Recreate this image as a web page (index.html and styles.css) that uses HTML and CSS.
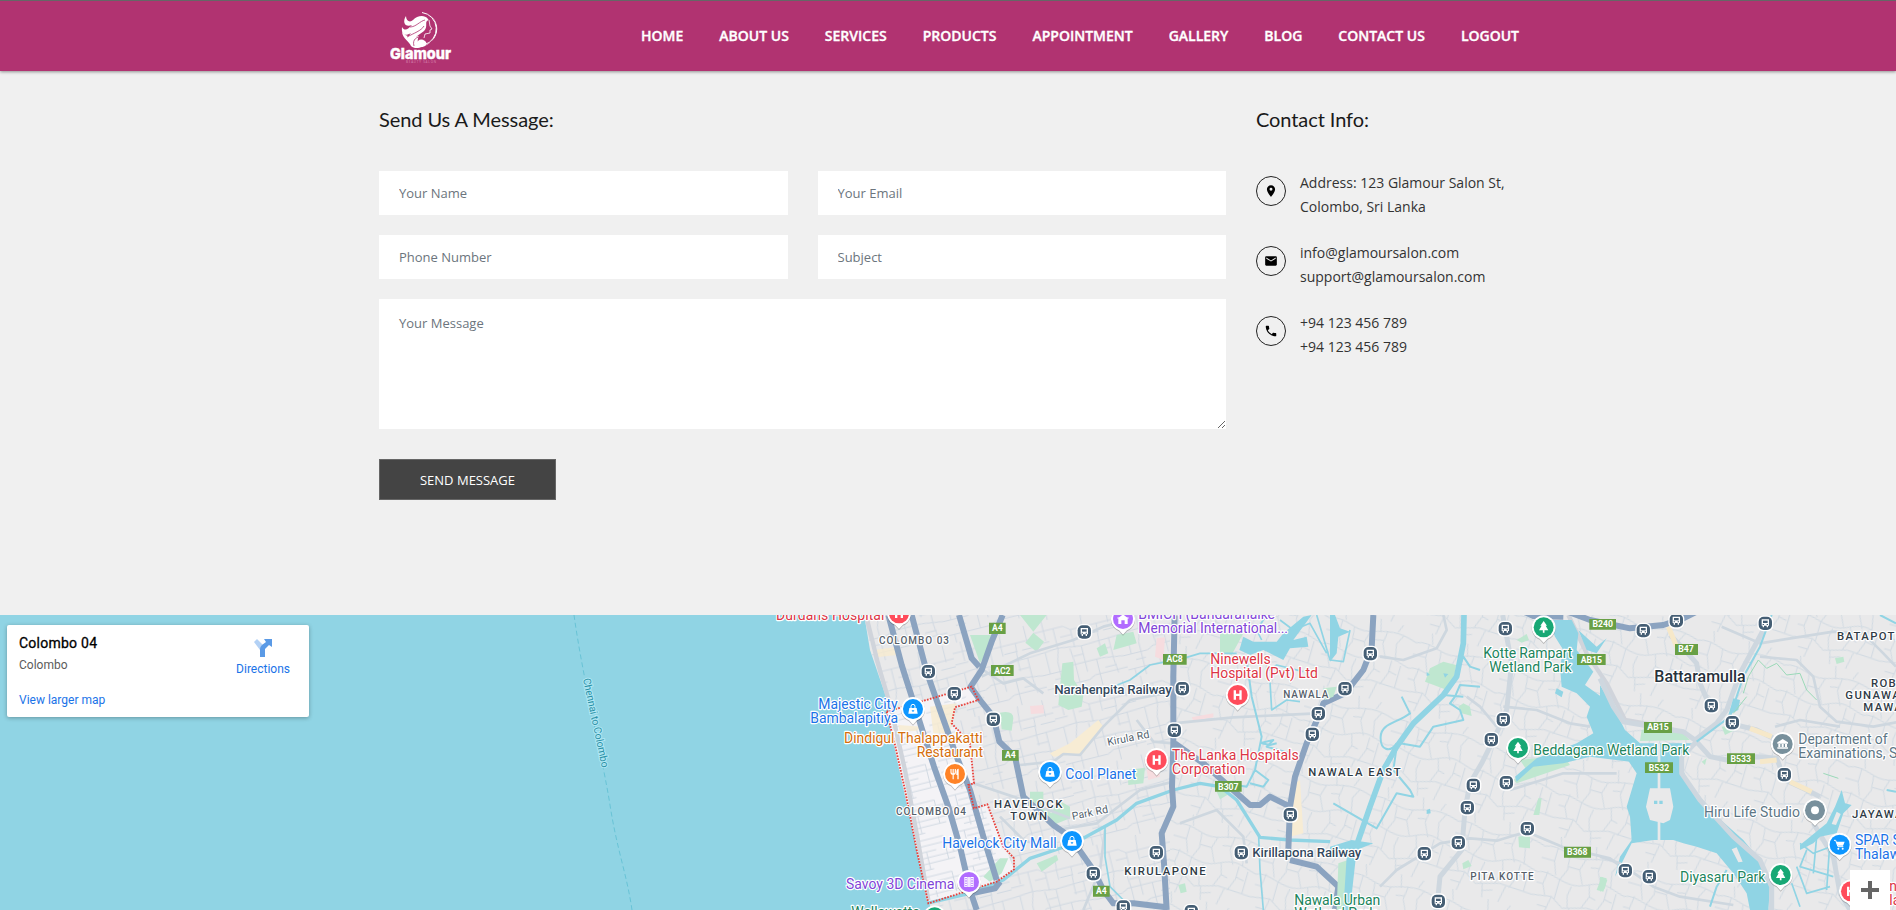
FILE: index.html
```html
<!DOCTYPE html>
<html lang="en">
<head>
<meta charset="utf-8">
<title>Glamour - Contact Us</title>
<link rel="stylesheet" href="styles.css">
</head>
<body>
<header class="header">
  <div class="container header-inner">
    <a class="logo" href="#">
      <svg width="62" height="56" viewBox="0 0 62 56">
        <path d="M32 1.500A16.500 16.500 0 0 1 34 33.800" fill="none" stroke="#fff" stroke-width="1"/>
        <path d="M31 1.200C46 2 50 18 43 28C41 31 38 34 34 35C43 31 48.500 24 47 15C45.500 7 39 1.500 31 1.200Z" fill="#fff"/>
        <path d="M38 8C34 3 27 5 23 9C20 12 16 10 16 5C12 11 15 17 22 14C18 18 15 21 12 16C11 25 16 25 21 22C17 26 19 31 25 35C21 27 29 24 34 20C38 16 35 12 37 10C38 9 39 9 38 8Z" fill="#fff"/>
        <path d="M12 21C13 28 19 30 21 35C24 38 29 37 32 36C27 34 27 28 29 25C25 26 17 27 12 21Z" fill="#fff"/>
        <path d="M26 34C27 29 31 27 35 30C40 34 31 39 26 34Z" fill="#fff"/>
        <path d="M39 9L40 15L42 18L40 19L40 22L35 23L34 27" fill="none" stroke="#fff" stroke-width=".8"/>
        <path d="M20 16C26 16 30 10 35 9M17 26C24 22 31 20 34 15M24 35C22 28 27 26 32 25" fill="none" stroke="#b13371" stroke-width=".8"/>
        <text x="0" y="48" textLength="61" lengthAdjust="spacingAndGlyphs" class="logo-name">Glamour</text>
        <text x="16" y="51.800" textLength="30" class="logo-sub">BEAUTY SALON</text>
      </svg>
    </a>
    <nav class="nav">
      <a href="#">Home</a><a href="#">About Us</a><a href="#">Services</a><a href="#">Products</a><a href="#">Appointment</a><a href="#">Gallery</a><a href="#">Blog</a><a href="#">Contact Us</a><a href="#">Logout</a>
    </nav>
  </div>
</header>

<main class="container contact">
  <section class="message">
    <h2>Send Us A Message:</h2>
    <form class="form">
      <input type="text" placeholder="Your Name">
      <input type="text" placeholder="Your Email">
      <input type="text" placeholder="Phone Number">
      <input type="text" placeholder="Subject">
      <textarea placeholder="Your Message"></textarea>
      <button type="button">Send Message</button>
    </form>
  </section>
  <section class="info">
    <h2>Contact Info:</h2>
    <ul>
      <li><span class="ring"><svg width="14" height="14" viewBox="0 0 24 24"><path d="M12 2C8.130 2 5 5.130 5 9c0 5.250 7 13 7 13s7-7.750 7-13c0-3.870-3.130-7-7-7zm0 9.500a2.500 2.500 0 1 1 0-5 2.500 2.500 0 0 1 0 5z"/></svg></span><p>Address: 123 Glamour Salon St,<br>Colombo, Sri Lanka</p></li>
      <li><span class="ring"><svg width="14" height="14" viewBox="0 0 24 24"><path d="M20 4H4c-1.100 0-2 .9-2 2v12c0 1.100.9 2 2 2h16c1.100 0 2-.9 2-2V6c0-1.100-.9-2-2-2zm0 4l-8 5-8-5V6l8 5 8-5v2z"/></svg></span><p>info@glamoursalon.com<br>support@glamoursalon.com</p></li>
      <li><span class="ring"><svg width="14" height="14" viewBox="0 0 24 24"><path d="M6.600 10.800c1.400 2.800 3.800 5.100 6.600 6.600l2.200-2.200c.3-.3.700-.4 1-.2 1.100.4 2.300.6 3.600.6.600 0 1 .4 1 1V20c0 .6-.4 1-1 1C10.600 21 3 13.400 3 4c0-.6.400-1 1-1h3.500c.6 0 1 .4 1 1 0 1.300.2 2.500.6 3.600.1.300 0 .7-.2 1z"/></svg></span><p>+94 123 456 789<br>+94 123 456 789</p></li>
    </ul>
  </section>
</main>

<section class="map">
<svg class="map-canvas" width="1896" height="295" viewBox="0 615 1896 295">
  <defs>
    <pattern id="st1" width="250" height="230" patternUnits="userSpaceOnUse" patternTransform="rotate(-14)">
      <path class="street" d="M0 30H90L110 45H250M0 95L60 90L130 100L250 95M0 160H70L90 150H180L250 160M0 205H130L150 195H250M30 0V60M60 30V95L50 130V230M110 45V100M150 0L145 45V75M190 45L185 95V130M225 0V50M20 95V160M95 100L100 150V205M130 100V180M165 150V230M215 95V160L220 205M0 65H40M150 70H190M205 70H250M100 125H130M180 125H215M30 180H60M185 180H220M75 60H110M20 230V205"/>
    </pattern>
    <pattern id="st2" width="270" height="240" patternUnits="userSpaceOnUse" patternTransform="rotate(16)">
      <path class="street" d="M0 40C50 20 80 60 130 45S210 20 270 40M0 120C40 100 90 150 150 120S220 110 270 120M0 190L60 180L100 205L170 185L270 190M40 35V75L55 115M80 45L85 90L70 125V185M130 45L120 80L140 122M180 30L175 70L195 112M230 30L215 60L225 110M30 110L25 150L40 182M110 135L105 165L115 200M160 115L170 150L155 188M215 112V150L200 190M245 120V188M60 180L50 240M120 200L130 240M190 188L180 240M40 0L50 32M150 0L160 38M220 0L210 25M85 80H120M175 60L150 65M25 150H5M170 150L190 155M215 145L240 150M55 215H25M125 220L155 210M0 75H40"/>
    </pattern>
    <pattern id="comb" width="190" height="110" patternUnits="userSpaceOnUse" patternTransform="rotate(-14)">
      <path class="street" d="M0 12H150M30 30H190M0 48H120M60 66H190M0 84H170M30 102H100M25 12V48M90 48V102M150 12V84M170 30V66M50 84V110"/>
    </pattern>
    <g id="bus">
      <rect x="-24" y="-24" width="48" height="48" rx="18" fill="#fff"/><rect x="-20" y="-20" width="40" height="40" rx="15" fill="#455e74"/>
      <path d="M-11-12H11V7H8V12H4V7H-4V12H-8V7H-11Z" fill="#fff"/><path d="M-7-8H7V-1H-7Z" fill="#455e74"/><path d="M-8 2h4v3h-4zM4 2h4v3H4z" fill="#455e74"/>
    </g>
    <path id="pin" d="M0 47L-12 34A36 36 0 1 1 12 34Z" fill="#fff"/>
    <g id="bag"><use href="#pin" class="pin-shadow"/><circle r="30" fill="#0d96ff"/><path d="M-11-3H11L14 14H-14Z" fill="#fff"/><path d="M-6-2V-8A6 6 0 0 1 6-8V-2" fill="none" stroke="#fff" stroke-width="3"/><path d="M-4 4A4 4 0 0 0 4 4Z" fill="#0d96ff"/></g>
    <g id="hosp"><use href="#pin" class="pin-shadow"/><circle r="30" fill="#ff4c5b"/><path d="M-12-14h7v10H5v-10h7V14H5V3H-5V14h-7z" fill="#fff"/></g>
    <g id="tree"><use href="#pin" class="pin-shadow"/><circle r="30" fill="#18a875"/><path d="M0-19L10-5H6L14 9H2.500V16H-2.500V9H-14L-6-5H-10Z" fill="#fff"/></g>
  </defs>

  <rect y="615" width="1896" height="295" fill="#90d4e4"/>
  <path d="M574 615C583 680 603 760 610 805S627 875 632 910" class="ferry"/>
  <text class="ferry-label" transform="translate(583 679) rotate(78)" textLength="91">Chennai to Colombo</text>

  <g transform="translate(770 610) scale(.333333)">
    <!-- land -->
    <path id="land" d="M280 0L300 120L348 260L380 410L410 560L440 720L470 860L485 900H3400V0Z" fill="#e9e9ea"/>
    <path d="M280 0L300 120L348 260L380 410L410 560L440 720L470 860L485 900H1200V0Z" fill="url(#st1)"/>
    <path d="M1200 0H3400V900H1200Z" fill="url(#st2)"/>
    <path d="M350 305L605 230L625 270L555 292L545 340L600 400L612 520L595 525L612 595L652 583L732 778L680 815L475 880Z" fill="#f4f3f6"/>
    <path d="M360 320L600 240L548 330L590 540L645 590L700 800L475 870Z" fill="url(#comb)"/>
    <path d="M312 120L372 112L380 135L320 142ZM385 345L455 350L440 362L390 366ZM480 290L560 280L540 370L490 370Z" fill="#f7ebcf" opacity=".8"/>

    <!-- coastal districts -->
    <g>
      <path class="park" d="M600 75H680L630 160ZM750 15H830L790 65ZM790 68L822 95L800 125L766 98ZM690 308Q730 300 730 325L725 362L695 358ZM780 545H820V595L845 610L865 570L900 590V625L850 645L780 590ZM640 800L690 745L715 745L695 790L660 815ZM800 760L860 735L865 750L815 785Z"/>
      <path class="park" d="M877 160L910 155L912 210L940 255L935 290L895 300L865 285L872 210ZM980 115L1005 100L1015 130L990 140ZM1040 75L1090 65L1100 100L1030 120ZM1350 70L1420 70L1385 135L1350 125ZM1072 480L1125 473L1120 520L1075 525ZM1340 545L1365 540L1372 555L1350 568ZM1225 825L1245 820L1250 845L1232 850Z"/>
      <path d="M780 288L820 285L822 310L783 312ZM1160 85L1185 82L1180 150L1155 140ZM1265 322L1330 310V322L1270 332ZM1130 480L1165 470L1170 500L1135 510Z" fill="#f6dcdf"/>
      <path d="M840 430L900 400L985 330L1000 350L940 430L850 440ZM1560 530L1590 510L1600 670L1560 680Z" fill="#f7ecd4"/>
      <path class="road wide" d="M288 15L325 165L362 290L405 480L440 670L475 870"/>
      <path class="road" d="M635 200L780 130L910 90L1000 50L1060 35M750 465L850 455L880 432L930 435L1000 350L1080 270L1210 245M1210 340L1390 322L1640 310M1210 515L1110 540L980 640L860 660M610 520L760 570L900 625M1210 400L1150 395L1100 330"/>
      <path class="road" d="M640 180L700 220L760 205L820 250M690 620L760 690L850 720M1005 660L990 780L940 900M1230 640L1340 600L1420 680L1430 760"/>
      <path class="water-line" d="M470 880L600 850L700 810L780 745L900 705L940 685L1040 630L1100 580L1210 540L1290 520L1350 530L1400 570L1470 682L1560 690L1680 695"/>
      <path class="water-line thin" d="M1005 650V740L1020 830L1060 870M990 245L1080 210L1140 165L1240 145L1290 130H1400M1466 680L1470 780L1480 900"/>
      <path class="water-line mid" d="M1430 150L1445 260L1475 380L1455 480L1430 530L1370 520M1470 400L1510 390L1490 410L1560 430M1455 480L1495 510L1480 530L1440 520M1475 400L1500 405L1520 400"/>
      <path class="water" d="M1408 120L1420 80L1450 95L1520 95L1540 70L1600 20L1625 15L1570 90L1610 80L1615 110L1560 115L1540 150L1480 120L1440 135Z"/>
      <path class="water-line thin" d="M1490 185L1520 165L1600 185M1500 215L1505 300L1550 270L1590 275M1490 15L1460 60L1475 90M1530 30L1570 60L1620 40L1670 130M1640 15L1680 150L1720 155L1740 60"/>
      <path class="highway" d="M355 15L395 165L430 275L460 370L492 470L535 590L570 710L600 840L620 900M425 15L470 185L510 300L560 440L600 540L640 680L680 810M567 15L605 145L628 170M698 15L665 95L635 180L602 230L630 270L670 320L688 395L735 440L760 560L850 645L900 680L970 780L1000 840L1030 880H1090L1190 892M605 850L675 835L690 815"/>
      <path class="highway" d="M1214 15L1210 200V400L1206 530L1210 590L1175 670L1182 760L1190 900M1215 400L1300 460L1400 550L1440 585L1470 585L1500 560L1560 590L1575 500L1610 400L1650 310L1660 280L1725 250L1780 180L1805 115L1810 15M1560 590L1555 720M1560 750L1640 770L1705 830L1695 900"/>
    </g>

    <!-- Nawala and Pita Kotte -->
    <g transform="translate(1680 0)">
      <path class="park" d="M300 175L340 155L378 165L370 220L345 238L285 215ZM385 290L400 280L420 290L425 318L395 310ZM560 90L590 72L597 90L575 98ZM570 450L700 435L720 465L560 520L550 510L590 480ZM610 615L625 565H635L628 615ZM565 680L600 675V715L567 712ZM397 760L415 750L425 768L400 778ZM800 840L815 800L832 810L820 845ZM-20 235L20 230L10 260L-15 270ZM25 760L70 745L55 900H20Z"/>
      <path class="road big" d="M518 15L545 160L530 300L495 380L455 460L420 520L405 600L395 720L330 800L320 900"/>
      <path class="road" d="M150 830L200 780L330 700L420 685L500 692L590 665L700 712L840 745L900 790M150 140L220 150L320 115L350 60L340 15M520 290L620 300L720 340L780 350M410 260L450 290L500 350M540 540L700 490L860 490"/>
      <path class="road wide" d="M715 15L770 130L830 220L885 330L1000 350"/>
      <path class="water-line river" d="M402 15L400 100L380 200L340 255L250 340L200 410L160 480L120 590L75 720"/>
      <path class="water-line mid" d="M200 400C180 430 150 420 152 380S200 340 240 310L215 260M210 400L270 410L310 350L400 330L390 300L360 280L375 260L390 225L450 230M200 410L190 480L240 540L250 560L200 550L140 655L10 580M380 190L400 140L420 170L450 180M340 255L400 260"/>
      <path class="water" d="M0 710L65 690L130 700L80 720L60 900H40L50 740L0 745ZM0 15L15 15L30 55L60 65L25 80L20 130L0 155ZM290 185L300 195L290 198ZM340 190L355 192L345 203ZM290 600L300 596L302 610L290 612Z"/>
      <path class="water" d="M655 30H725L745 70L740 120L790 185L765 225L835 275L855 340L875 390L930 425L900 455L780 440L700 460L610 470L560 515L555 500L620 445L740 400L790 370L770 320L780 290L740 250L695 230L690 170L700 120L675 80Z"/>
      <path class="water" d="M745 60L800 110L830 85L800 130L770 120ZM680 235L700 245L695 262L675 250Z"/>
      <path class="highway" d="M570 0L610 18L700 20M700 0L780 30L900 55L1000 45L1060 25L1100 5"/>
    </g>

    <!-- Battaramulla -->
    <g transform="translate(2490 0)">
      <path class="water" d="M0 225L45 300L75 360L120 400H280L240 450L260 510L340 610L430 690L480 750L510 830L505 900H450L440 850L400 790L350 730L290 710L250 700L220 690L160 690L95 700L45 800L60 740L95 690L90 620L80 590L110 490L70 430L0 400Z"/>
      <path class="park" d="M125 360L180 345L250 370L270 390L120 393ZM365 350L400 345L405 360L375 375ZM705 145L730 140L733 155L710 162ZM0 800L20 805L15 835L0 845ZM305 455L320 445L315 465Z"/>
      <path d="M150 535H210L220 590L210 630L190 640L150 630L138 590ZM410 712L428 755L415 757L395 718Z" fill="#e9e9ea"/>
      <path class="road causeway" d="M177 400V540M177 635V690"/>
      <path d="M162 572h10v10h-10zM178 572h10v10h-10z" fill="#90d4e4"/>
      <path class="road big" d="M0 205L40 290L70 335L160 350L250 365L285 390L330 440L380 450L470 440L530 445L555 510L620 540L660 560M285 390L350 340L380 300L420 190L490 60L500 15M285 400L245 440V490L300 570L400 680L480 750L515 830V900M210 75L245 110L290 160L300 220L330 290M390 340L470 360L520 385L530 430M640 640L700 740L720 850L750 900"/>
      <path class="road" d="M365 50L480 100L700 65L800 70M480 140L590 150L640 200L660 290L710 335L820 350L900 335M800 80L850 130L888 170M0 740L60 760L160 830L240 860L400 885M525 350L600 330L720 350"/>
      <path d="M205 50L230 110M450 355L515 380M480 455L530 450M570 515L635 545" stroke="#f6e8c9" stroke-width="15" fill="none"/>
      <path class="water-line mid" d="M515 15L480 110L430 200L410 260L390 320L290 395M860 540L888 545M380 780L350 830L330 890M840 15L888 40"/>
      <path class="water" d="M400 265L420 270L415 300L385 315ZM725 540L735 580L755 585L730 610L710 670L660 680L640 700L600 720L600 705L680 640L705 590Z"/>
      <path class="water-line thin" d="M600 700L640 730L720 700M620 720L600 770L700 800M650 680L640 790M590 770L620 850L690 830M575 820L600 890M690 690L680 840"/>
      <path d="M710 605L722 612L708 645L695 642Z" fill="#e9e9ea"/>
      <path d="M430 250L445 200L475 150L500 175L530 160L560 195L600 190L620 240L650 270M400 310L440 260M670 490L715 505" fill="none" stroke="#9ad9b8" stroke-width="3"/>
    </g>

    <path class="boundary" d="M350 305L605 230L625 270L555 292L545 340L600 400L612 520L595 525L612 595L652 583L700 710L732 745V778L680 815L475 880L440 720L405 540L375 405Z"/>

    <!-- road shields -->
    <g class="shield">
      <path d="M657 38h50v34h-50zM663 165h68v33h-68zM696 420h50v32h-50zM1179 132h71v32h-71zM1335 513h80v32h-80zM969 827h50v33h-50zM2458 27h80v32h-80zM2421 132h86v33h-86zM2382 710h81v33h-81zM2715 102h69v33h-69zM2622 336h84v33h-84zM2625 457h84v32h-84zM2871 430h84v32h-84z"/>
      <text x="682" y="64">A4</text><text x="697" y="191">AC2</text><text x="721" y="445">A4</text><text x="1214" y="157">AC8</text><text x="1375" y="539">B307</text><text x="994" y="852">A4</text><text x="2498" y="52">B240</text><text x="2464" y="158">AB15</text><text x="2422" y="735">B368</text><text x="2748" y="127">B47</text><text x="2664" y="361">AB15</text><text x="2667" y="483">B532</text><text x="2912" y="455">B533</text>
    </g>

    <!-- stations -->
    <use href="#bus" x="475" y="185"/><use href="#bus" x="553" y="251"/><use href="#bus" x="670" y="328"/>
    <use href="#bus" x="943" y="66"/><use href="#bus" x="1237" y="236"/><use href="#bus" x="1213" y="361"/><use href="#bus" x="1725" y="236"/><use href="#bus" x="1645" y="311"/><use href="#bus" x="1627" y="373"/><use href="#bus" x="1561" y="614"/><use href="#bus" x="1414" y="728"/><use href="#bus" x="1159" y="728"/><use href="#bus" x="970" y="791"/><use href="#bus" x="1060" y="891"/><use href="#bus" x="1264" y="905"/>
    <use href="#bus" x="1801" y="131"/><use href="#bus" x="2206" y="56"/><use href="#bus" x="2200" y="329"/><use href="#bus" x="2164" y="389"/><use href="#bus" x="2110" y="526"/><use href="#bus" x="2209" y="518"/><use href="#bus" x="2092" y="593"/><use href="#bus" x="2272" y="656"/><use href="#bus" x="2065" y="698"/><use href="#bus" x="1963" y="731"/><use href="#bus" x="2005" y="874"/>
    <use href="#bus" x="2620" y="62"/><use href="#bus" x="2719" y="32"/><use href="#bus" x="2986" y="40"/><use href="#bus" x="2824" y="287"/><use href="#bus" x="2887" y="338"/><use href="#bus" x="3043" y="494"/><use href="#bus" x="2566" y="782"/><use href="#bus" x="2638" y="800"/>

    <!-- district names -->
    <g class="lbl area">
      <text class="sm" x="327" y="103" textLength="214">COLOMBO 03</text>
      <text class="sm" x="378" y="615" textLength="214">COLOMBO 04</text>
      <text x="672" y="593" textLength="209">HAVELOCK</text><text x="721" y="629" textLength="114">TOWN</text>
      <text x="1063" y="794" textLength="248">KIRULAPONE</text>
      <text class="sm" x="1540" y="265" textLength="139">NAWALA</text>
      <text x="1615" y="498" textLength="281">NAWALA EAST</text>
      <text class="sm" x="2101" y="811" textLength="194">PITA KOTTE</text>
      <text x="3201" y="89">BATAPOTHA</text>
      <text x="3303" y="230">ROBERT</text><text x="3226" y="267">GUNAWARDANA</text><text x="3280" y="303">MAWATHA</text>
      <text x="3246" y="623">JAYAWADANA</text>
    </g>
    <text class="lbl city" x="2653" y="217" textLength="274" lengthAdjust="spacingAndGlyphs">Battaramulla</text>

    <!-- places -->
    <g class="lbl">
      <g fill="#dc3545"><text x="18" y="31" textLength="325">Durdans Hospital</text>
        <text x="1321" y="162" textLength="181">Ninewells</text><text x="1321" y="204" textLength="323">Hospital (Pvt) Ltd</text>
        <text x="1206" y="450" textLength="380">The Lanka Hospitals</text><text x="1206" y="492" textLength="220">Corporation</text>
        <text x="3358" y="843">n</text><text x="3358" y="884">la</text></g>
      <g fill="#1a73e8"><text x="145" y="298" textLength="238">Majestic City</text><text x="121" y="340" textLength="263">Bambalapitiya</text>
        <text x="517" y="714" textLength="343">Havelock City Mall</text><text x="886" y="507" textLength="213">Cool Planet</text>
        <text x="3255" y="705">SPAR Supermarket</text><text x="3255" y="747">Thalawathugoda</text></g>
      <g fill="#d56e0c"><text x="222" y="399" textLength="416">Dindigul Thalappakatti</text><text x="440" y="441" textLength="199">Restaurant</text></g>
      <g fill="#8145d8"><text x="228" y="837" textLength="325">Savoy 3D Cinema</text>
        <text x="1105" y="27" textLength="410">BMICH (Bandaranaike</text><text x="1105" y="69" textLength="449">Memorial International...</text></g>
      <g fill="#20845c"><text x="244" y="920" textLength="205">Wellawatte</text>
        <text x="2140" y="144" textLength="267">Kotte Rampart</text><text x="2158" y="186" textLength="247">Wetland Park</text>
        <text x="2290" y="435" textLength="468">Beddagana Wetland Park</text>
        <text x="1573" y="885" textLength="258">Nawala Urban</text><text x="1573" y="925" textLength="246">Wetland Park</text>
        <text x="2730" y="816" textLength="256">Diyasaru Park</text></g>
      <g fill="#5d7685"><text x="3085" y="402" textLength="268">Department of</text><text x="3085" y="444">Examinations, Sri Lanka</text>
        <text x="2802" y="622" textLength="288">Hiru Life Studio</text></g>
      <g fill="#34495e" class="rail"><text x="853" y="251" textLength="352">Narahenpita Railway</text><text x="1447" y="741" textLength="327">Kirillapona Railway</text></g>
      <g class="roadname"><text transform="translate(1014 407) rotate(-11)" textLength="128">Kirula Rd</text><text transform="translate(908 630) rotate(-12)" textLength="110">Park Rd</text></g>
    </g>

    <!-- pins -->
    <use href="#hosp" x="387" y="10"/><use href="#hosp" x="1403" y="255"/><use href="#hosp" x="1160" y="450"/><use href="#hosp" x="3243" y="844"/>
    <use href="#bag" x="429" y="297"/><use href="#bag" x="840" y="486"/><use href="#bag" x="906" y="693"/>
    <use href="#tree" x="2321" y="52"/><use href="#tree" x="2244" y="414"/><use href="#tree" x="3032" y="795"/><use href="#tree" x="494" y="922"/>
    <g transform="translate(555 492)"><use href="#pin" class="pin-shadow"/><circle r="30" fill="#ff8327"/><path d="M-12-15V-5Q-12 1-5.500 1T1-5V-15M-5.500-15V16" fill="none" stroke="#fff" stroke-width="3.500"/><path d="M11-16V16H7V3H4V-5Q4-15 11-16Z" fill="#fff"/></g>
    <g transform="translate(597 816)"><use href="#pin" class="pin-shadow"/><circle r="30" fill="#b16cff"/><path d="M-14-15H14V15H-14Z" fill="#fff"/><path d="M-11-12h4v4h-4zm0 7h4v4h-4zm0 7h4v4h-4zm0 7h4v4h-4zM7-12h4v4H7zm0 7h4v4H7zm0 7h4v4H7zm0 7h4v4H7zM-4-15h1.500V15H-4zM2.500-15H4V15H2.500z" fill="#b16cff"/></g>
    <g transform="translate(1059 27)"><use href="#pin" class="pin-shadow"/><circle r="30" fill="#b16cff"/><path d="M-14 15V-3L0-14L14-3V15H5V4H-5V15Z" fill="#fff"/><path d="M-17-3H17" stroke="#fff" stroke-width="3"/></g>
    <g transform="translate(3038 402)"><use href="#pin" class="pin-shadow"/><circle r="30" fill="#78909c"/><path d="M-16-5L0-15L16-5V-1H-16ZM-16 10H16V14H-16ZM-13 0h6v9h-6zM-3 0h6v9h-6zM7 0h6v9H7z" fill="#fff"/></g>
    <g transform="translate(3135 601)"><use href="#pin" class="pin-shadow"/><circle r="30" fill="#78909c"/><circle r="12" fill="#fff"/></g>
    <g transform="translate(3209 704)"><use href="#pin" class="pin-shadow"/><circle r="30" fill="#0d96ff"/><path d="M-17-13H-12L-5 6H11" fill="none" stroke="#fff" stroke-width="3"/><path d="M-10-9H15L10 3H-6Z" fill="#fff"/><circle cx="-4" cy="12" r="3" fill="#fff"/><circle cx="9" cy="12" r="3" fill="#fff"/></g>
  </g>
</svg>
<div class="place-card">
  <div class="place">
    <strong>Colombo 04</strong>
    <span>Colombo</span>
    <a href="#">View larger map</a>
  </div>
  <a class="directions" href="#">
    <svg width="18" height="18" viewBox="0 0 18 18"><path d="M0 3L3 0L9 6L6 11Z" fill="#b3d1f5"/><path d="M6 18V10Q6 8 8 6L12 3L10 0H18V8L15 6L11 10V18Z" fill="#5a9ae6"/></svg>
    Directions
  </a>
</div>
<button class="zoom" aria-label="Zoom in"><svg width="18" height="18" viewBox="0 0 18 18"><path d="M7 0h4v7h7v4h-7v7H7v-7H0V7h7z" fill="#666"/></svg></button>
</section>
</body>
</html>
```
FILE: styles.css
```css
* { box-sizing: border-box; }
body { margin: 0; height: 910px; overflow: hidden; background: #f0f0f0; font: 14px/24px "Open Sans", sans-serif; color: #111; }
a { text-decoration: none; }
.container { width: 1170px; margin: 0 auto; padding: 0 14px 0 16px; }

.header { height: 71px; background: #b13371; border-top: 1px solid #666; box-shadow: 0 1px 3px rgba(0, 0, 0, .4); }
.header-inner { display: flex; justify-content: space-between; height: 70px; }
.logo { padding: 10px 0 0 11px; }
.logo svg { display: block; }
.logo-name { font: 800 15px Inter, sans-serif; fill: #fff; stroke: #fff; stroke-width: .4; }
.logo-sub { font: 3px "Open Sans", sans-serif; fill: #d98bb4; }
.nav { display: flex; gap: 36px; align-items: center; }
.nav a { color: #fff; font-weight: 600; text-transform: uppercase; -webkit-text-stroke: .35px #fff; }

.contact { display: flex; gap: 30px; height: 544px; padding-top: 33px; }
.message { width: 847px; }
.info { flex: 1; }
h2 { margin: 0 0 37px; font: 400 20px/30px Lato, sans-serif; letter-spacing: -.08px; color: #1a1a1a; }
.form { display: grid; grid-template-columns: 1fr 1fr; gap: 20px 30px; }
.form input, .form textarea { display: block; width: 100%; border: 0; border-radius: 0; background: #fff; padding: 0 20px; font: 13px "Open Sans", sans-serif; outline: 0; }
.form input { height: 44px; }
.form textarea { grid-column: 1 / -1; height: 130px; padding-top: 15px; resize: vertical; }
.form ::placeholder { color: #6c757d; opacity: 1; }
.form button { justify-self: start; width: 177px; height: 41px; margin-top: 10px; border: 1px solid #666; background: #444; color: #fff; font: 13px "Open Sans", sans-serif; text-transform: uppercase; }
.info ul { margin: 0; padding: 0; list-style: none; display: flex; flex-direction: column; gap: 22px; }
.info li { display: flex; gap: 14px; }
.info p { margin: 0; color: #333; }
.ring { display: flex; align-items: center; justify-content: center; width: 30px; height: 30px; margin-top: 5px; border: 1px solid #222; border-radius: 50%; }

.map { position: relative; height: 295px; overflow: hidden; font-family: Roboto, sans-serif; }
.map-canvas { display: block; }
.map-canvas text { font-family: Roboto, sans-serif; }
.street { fill: none; stroke: #cfd8e1; stroke-width: 2.8; }
.road { fill: none; stroke: #ced7df; stroke-width: 8; stroke-linejoin: round; }
.road.big { stroke-width: 15; }
.road.wide { stroke-width: 13; stroke: #d0d4db; }
.road.causeway { stroke: #e9e9ea; }
.highway { fill: none; stroke: #8ba3c0; stroke-width: 18; stroke-linejoin: round; }
.park { fill: #bfe7d0; }
.water { fill: #90d4e4; }
.water-line { fill: none; stroke: #90d4e4; stroke-width: 10; stroke-linejoin: round; }
.water-line.mid { stroke-width: 6; }
.water-line.thin { stroke-width: 5; }
.water-line.river { stroke-width: 17; }
.boundary { fill: none; stroke: #e8403a; stroke-width: 5.5; stroke-dasharray: 5 4; }
.ferry { fill: none; stroke: #68c3d6; stroke-dasharray: 5 3; }
.ferry-label { font-size: 10.5px; fill: #2a91a6; stroke: #b2e8f5; stroke-width: 2px; paint-order: stroke; }
.shield path { fill: #68a045; }
.shield text { fill: #fff; font-size: 26px; font-weight: 700; text-anchor: middle; }
.lbl text, text.lbl { font-size: 42px; stroke: #fff; stroke-width: 7px; stroke-linejoin: round; paint-order: stroke; }
.area { fill: #2f3b46; }
.area text { font-size: 34px; font-weight: 500; letter-spacing: 4px; }
.area text.sm { font-size: 30px; fill: #56606a; }
text.city { font-size: 47px; font-weight: 500; fill: #26313b; }
.lbl .rail text { font-size: 40px; font-weight: 500; }
.lbl .roadname text { font-size: 32px; fill: #51606c; }
.pin-shadow { filter: drop-shadow(0 2px 2px rgba(0, 0, 0, .35)); }

.place-card { position: absolute; left: 7px; top: 10px; display: flex; justify-content: space-between; width: 302px; height: 92px; padding: 8px 19px 0 12px; border-radius: 2px; background: #fff; box-shadow: 0 1px 4px rgba(0, 0, 0, .3); font-size: 12px; line-height: 16px; }
.place { display: flex; flex-direction: column; }
.place strong { font-size: 14px; line-height: 20px; font-weight: 400; letter-spacing: .25px; -webkit-text-stroke: .3px #000; color: #000; }
.place span { margin-top: 4px; color: #5b5b5b; }
.place a { margin-top: 19px; color: #1a73e8; }
.directions { display: flex; flex-direction: column; align-items: center; gap: 4px; padding-top: 6px; color: #1a73e8; }
.zoom { position: absolute; left: 1850px; top: 255px; width: 40px; height: 40px; padding: 0; display: flex; align-items: center; justify-content: center; border: 0; background: #fff; }
```
